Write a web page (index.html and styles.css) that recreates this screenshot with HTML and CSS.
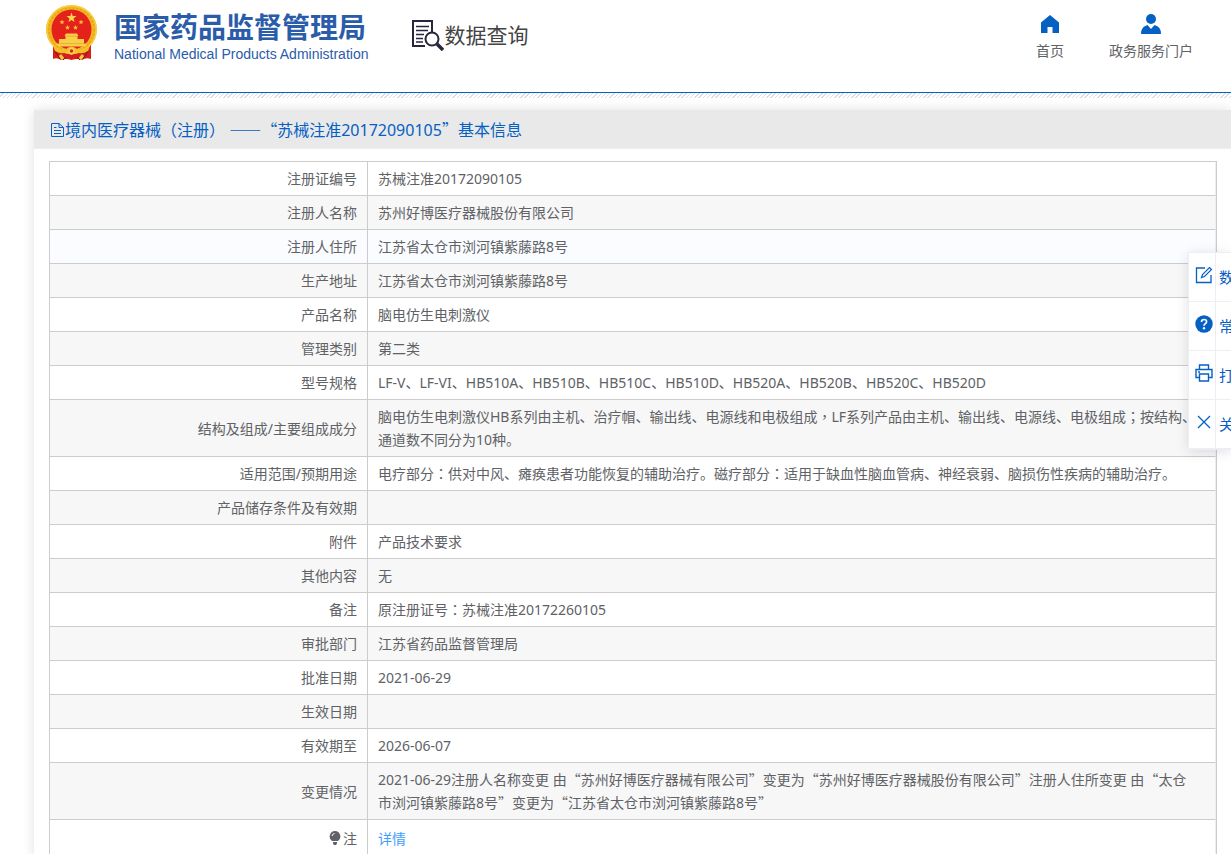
FILE: index.html
```html
<!DOCTYPE html>
<html lang="zh-CN">
<head>
<meta charset="UTF-8">
<title>数据查询</title>
<meta name="viewport" content="width=device-width, initial-scale=1.0">
<link rel="stylesheet" href="styles.css">
</head>

<body>

<header class="header">
  <div class="logo">
    <svg class="emblem" viewBox="0 0 51 56">
      <path d="M7 38 L7 54 Q11 52 15 55 Q20 53 25.500 55 Q31 53 36 55 Q40 52 45 54 L45 38 Z" fill="#d3201c"/>
      <path d="M9 46 L14 54 M42 46 L37 54 M20 52 L17 55 M31 52 L34 55" stroke="#8f130f" stroke-width="1"/>
      <ellipse cx="25.500" cy="24.500" rx="25.500" ry="24.500" fill="#f3b821"/>
      <ellipse cx="25.500" cy="24.500" rx="22.500" ry="21.500" fill="none" stroke="#e3a51c" stroke-width="1.500" stroke-dasharray="2 2"/>
      <ellipse cx="25.500" cy="24.500" rx="24.700" ry="23.700" fill="none" stroke="#fbd64c" stroke-width="1"/>
      <circle cx="25.500" cy="24.500" r="20" fill="#e4211b"/>
      <path d="M25.500 7.500 L26.700 11 L30.500 11.100 L27.500 13.400 L28.600 17 L25.500 14.900 L22.400 17 L23.500 13.400 L20.500 11.100 L24.300 11 Z" fill="#fbd84a"/>
      <path d="M16 14.500 l.7 1.700 1.800 .1 -1.400 1.100 .5 1.800 -1.600-1 -1.600 1 .5-1.800 -1.400-1.100 1.800-.1Z M35 14.500 l.7 1.700 1.800 .1 -1.400 1.100 .5 1.800 -1.600-1 -1.600 1 .5-1.800 -1.400-1.100 1.800-.1Z M21.500 20 l.7 1.700 1.800 .1 -1.400 1.100 .5 1.800 -1.600-1 -1.600 1 .5-1.800 -1.400-1.100 1.800-.1Z M29.500 20 l.7 1.700 1.800 .1 -1.400 1.100 .5 1.800 -1.600-1 -1.600 1 .5-1.800 -1.400-1.100 1.800-.1Z" fill="#f9c83c"/>
      <path d="M20 28.500 H31 L32.500 31 H18.500 Z M19.500 31 H31.500 V34 H19.500 Z M13 34 H38 V38.500 H13 Z M10 38.500 H41 L39 41.500 H12 Z" fill="#f8cf48"/>
      <path d="M19 31.200 H32 M13 38.500 H38" stroke="#e09a2a" stroke-width=".6"/>
      <path d="M7 41 Q15 45 20 44 Q25.500 39 31 44 Q36 45 44 41 L42 46 Q35 50 30 47 Q25.500 53 21 47 Q16 50 9 46 Z" fill="#f5bf2c"/>
      <path d="M14 50 L17 54 M37 50 L34 54" stroke="#f5c93c" stroke-width="3"/>
      <circle cx="25.500" cy="46" r="2.500" fill="#e4211b" stroke="#f9d550" stroke-width="1.500"/>
    </svg>
    <div class="logo-text">
      <div class="logo-cn">国家药品监督管理局</div>
      <div class="logo-en">National Medical Products Administration</div>
    </div>
  </div>

  <div class="module">
    <svg class="module-icon" viewBox="0 0 32 31">
      <path d="M20 12 V1 H1 V26 H13" fill="none" stroke="#28263c" stroke-width="2"/>
      <path d="M4 6.500 H17 M4 10.500 H16 M4 14.500 H12 M4 18.500 H11 M4 22 H11" stroke="#28263c" stroke-width="1.300"/>
      <circle cx="20" cy="19" r="6.500" fill="none" stroke="#28263c" stroke-width="2"/>
      <path d="M25 24 L31 30" stroke="#28263c" stroke-width="3.500"/>
    </svg>
    <span>数据查询</span>
  </div>

  <nav class="nav">
    <a href="#">
      <svg viewBox="0 0 20 20"><path d="M10 1 L19 8.500 V19 H12.500 V13 H7.500 V19 H1 V8.500 Z" fill="#0560c4"/></svg>
      <span>首页</span>
    </a>
    <a href="#">
      <svg viewBox="0 0 20 20"><circle cx="10" cy="5" r="5" fill="#0560c4"/><path d="M0 20 Q0 12.500 6.500 11 L10 15 L13.500 11 Q20 12.500 20 20 Z" fill="#0560c4"/></svg>
      <span>政务服务门户</span>
    </a>
  </nav>
</header>
<div class="stripe"></div>

<main class="panel">
  <h1 class="panel-title">
    <svg viewBox="0 0 15 16"><path d="M1.500 1.500 H9 L13.500 5.500 V14.500 H1.500 Z M9 1.500 V5.500 H13.500 M4 5.500 H6.500 M4 8.500 H11 M4 11.500 H11" fill="none" stroke="#0560c4"/></svg>
    <span>境内医疗器械（注册） <span class="cn">——“</span>苏械注准20172090105<span class="cn">”</span>基本信息</span>
  </h1>

  <div class="table-box">
    <table class="info">
      <tr><th>注册证编号</th><td>苏械注准20172090105</td></tr>
      <tr><th>注册人名称</th><td>苏州好博医疗器械股份有限公司</td></tr>
      <tr class="active"><th>注册人住所</th><td>江苏省太仓市浏河镇紫藤路8号</td></tr>
      <tr><th>生产地址</th><td>江苏省太仓市浏河镇紫藤路8号</td></tr>
      <tr><th>产品名称</th><td>脑电仿生电刺激仪</td></tr>
      <tr><th>管理类别</th><td>第二类</td></tr>
      <tr><th>型号规格</th><td>LF-V、LF-VI、HB510A、HB510B、HB510C、HB510D、HB520A、HB520B、HB520C、HB520D</td></tr>
      <tr><th>结构及组成/主要组成成分</th><td>脑电仿生电刺激仪HB系列由主机、治疗帽、输出线、电源线和电极组成<span class="mid" lang="zh-TW">，</span>LF系列产品由主机、输出线、电源线、电极组成<span class="mid" lang="zh-TW">；</span>按结构、通道数不同分为10种。</td></tr>
      <tr><th>适用范围/预期用途</th><td>电疗部分<span class="mid" lang="zh-TW">：</span>供对中风、瘫痪患者功能恢复的辅助治疗。磁疗部分<span class="mid" lang="zh-TW">：</span>适用于缺血性脑血管病、神经衰弱、脑损伤性疾病的辅助治疗。</td></tr>
      <tr><th>产品储存条件及有效期</th><td></td></tr>
      <tr><th>附件</th><td>产品技术要求</td></tr>
      <tr><th>其他内容</th><td>无</td></tr>
      <tr><th>备注</th><td>原注册证号<span class="mid" lang="zh-TW">：</span>苏械注准20172260105</td></tr>
      <tr><th>审批部门</th><td>江苏省药品监督管理局</td></tr>
      <tr><th>批准日期</th><td>2021-06-29</td></tr>
      <tr><th>生效日期</th><td></td></tr>
      <tr><th>有效期至</th><td>2026-06-07</td></tr>
      <tr><th>变更情况</th><td>2021-06-29注册人名称变更 由<span class="cn">“</span>苏州好博医疗器械有限公司<span class="cn">”</span>变更为<span class="cn">“</span>苏州好博医疗器械股份有限公司<span class="cn">”</span>注册人住所变更 由<span class="cn">“</span>太仓市浏河镇紫藤路8号<span class="cn">”</span>变更为<span class="cn">“</span>江苏省太仓市浏河镇紫藤路8号<span class="cn">”</span></td></tr>
      <tr class="note">
        <th><svg class="bulb" viewBox="0 0 12 14"><path d="M6 0 A5.500 5.500 0 0 1 9 10 H3 A5.500 5.500 0 0 1 6 0 Z M4 11 H8 V12.500 L7 14 H5 L4 12.500 Z" fill="#606266"/><path d="M3 5 Q3.300 2.800 5.500 2.500" fill="none" stroke="#fff"/></svg>注</th>
        <td><a href="#">详情</a></td>
      </tr>
    </table>
  </div>
</main>

<div class="side">
  <button type="button">
    <svg viewBox="0 0 18 18"><path d="M10 2 H1.500 V16.500 H16 V9" fill="none" stroke="#0560c4" stroke-width="1.300"/><path d="M6.500 11.500 L7.500 8.500 L14.500 1.500 L16.500 3.500 L9.500 10.500 Z" fill="none" stroke="#0560c4" stroke-width="1.200"/></svg>
    <span>数</span>
  </button>
  <button type="button">
    <svg viewBox="0 0 18 18"><circle cx="9" cy="9" r="8.700" fill="#0560c4"/><path d="M6.500 7 Q6.500 4.500 9 4.500 Q11.600 4.500 11.600 6.800 Q11.600 8 10.200 8.800 Q9 9.500 9 10.800" fill="none" stroke="#fff" stroke-width="1.700"/><circle cx="9" cy="13.200" r="1.200" fill="#fff"/></svg>
    <span>常</span>
  </button>
  <button type="button">
    <svg viewBox="0 0 18 18"><path d="M4.500 5.500 V1 H13.500 V5.500 M4.500 13.500 H1 V5.500 H17 V13.500 H13.500 M4.500 10 H13.500 V17 H4.500 Z M3 8 H5" fill="none" stroke="#0560c4" stroke-width="1.400"/></svg>
    <span>打</span>
  </button>
  <button type="button">
    <svg viewBox="0 0 18 18"><path d="M3 3 L15 15 M15 3 L3 15" stroke="#0560c4" stroke-width="1.300"/></svg>
    <span>关</span>
  </button>
</div>

</body>
</html>
```

FILE: styles.css
```css
*{box-sizing:border-box}
body{margin:0;background:#fff;color:#606266;font:14px/23px "Noto Sans","Noto Sans CJK SC",sans-serif;overflow-x:hidden}
a{text-decoration:none}
svg{flex:none}

.header{display:flex;align-items:flex-start;height:93px;padding:5px 38px 0 46px;border-bottom:1px solid #0560c4}
.logo{display:flex;gap:17px}
.emblem{width:51px;height:56px}
.logo-text{color:#2a5caa;white-space:nowrap;padding-top:2px}
.logo-cn{font:bold 28px/38px "Noto Sans CJK SC",sans-serif}
.logo-en{font:14px/18px "Liberation Sans",sans-serif}
.module{display:flex;align-items:center;margin-left:44px;padding-top:11px;color:#444;font:21px/34px "Noto Sans CJK SC",sans-serif;white-space:nowrap}
.module-icon{width:32px;height:31px;margin-top:4px}
.nav{display:flex;gap:45px;margin-left:auto;padding-top:9px;white-space:nowrap}
.nav a{display:flex;flex-direction:column;align-items:center;gap:5px;color:#606266}
.nav svg{width:20px;height:20px}
.stripe{height:5px;background:repeating-linear-gradient(135deg,#fff 0 2px,#ddd 2px 3px)}

.panel{margin:12px 0 0 34px;box-shadow:0 0 12px rgba(0,0,0,.12)}
.panel-title{display:flex;align-items:center;margin:0;height:39px;padding:2px 16px 0;background:#e9e9e9;border-bottom:1px solid #ebeef5;color:#0560c4;font-size:16px;font-weight:normal}
.panel-title svg{width:15px;height:16px}
.cn{font-family:"Noto Sans CJK SC",sans-serif}
.mid{font-family:"Noto Sans CJK TC",sans-serif}

.table-box{margin:12px 14px 0 15px;border:1px solid #ccc}
.info{width:100%;table-layout:fixed;border-collapse:separate;border-spacing:0}
.info th,.info td{height:34px;padding:5px 10px;border-bottom:1px solid #ccc;font-weight:normal}
.info th{width:318px;text-align:right;border-right:1px solid #ccc}
.info td{padding-right:16px;border-right:1px solid #ebeef5}
.info tr:nth-child(even){background:#f7f7f7}
.info .active{background:#fafcff}
.info .note th,.info .note td{height:38px}
.info a{color:#409eff}
.bulb{width:12px;height:14px;margin-right:2px;vertical-align:-1px}

.side{position:fixed;top:252px;right:0;width:43px;overflow:hidden;background:#fff;border:1px solid #ebeef5;border-right:0;box-shadow:0 2px 12px rgba(0,0,0,.12)}
.side button{display:flex;align-items:center;height:49px;padding:0;border:0;border-bottom:1px solid #ebeef5;background:#fff;color:#0560c4;font:15px/24px "Noto Sans CJK SC",sans-serif}
.side svg{width:18px;height:18px;margin:0 2px 4px 6px}
.side span{padding:12px 0 12px 3px;border-left:1px solid #ebeef5}
```
